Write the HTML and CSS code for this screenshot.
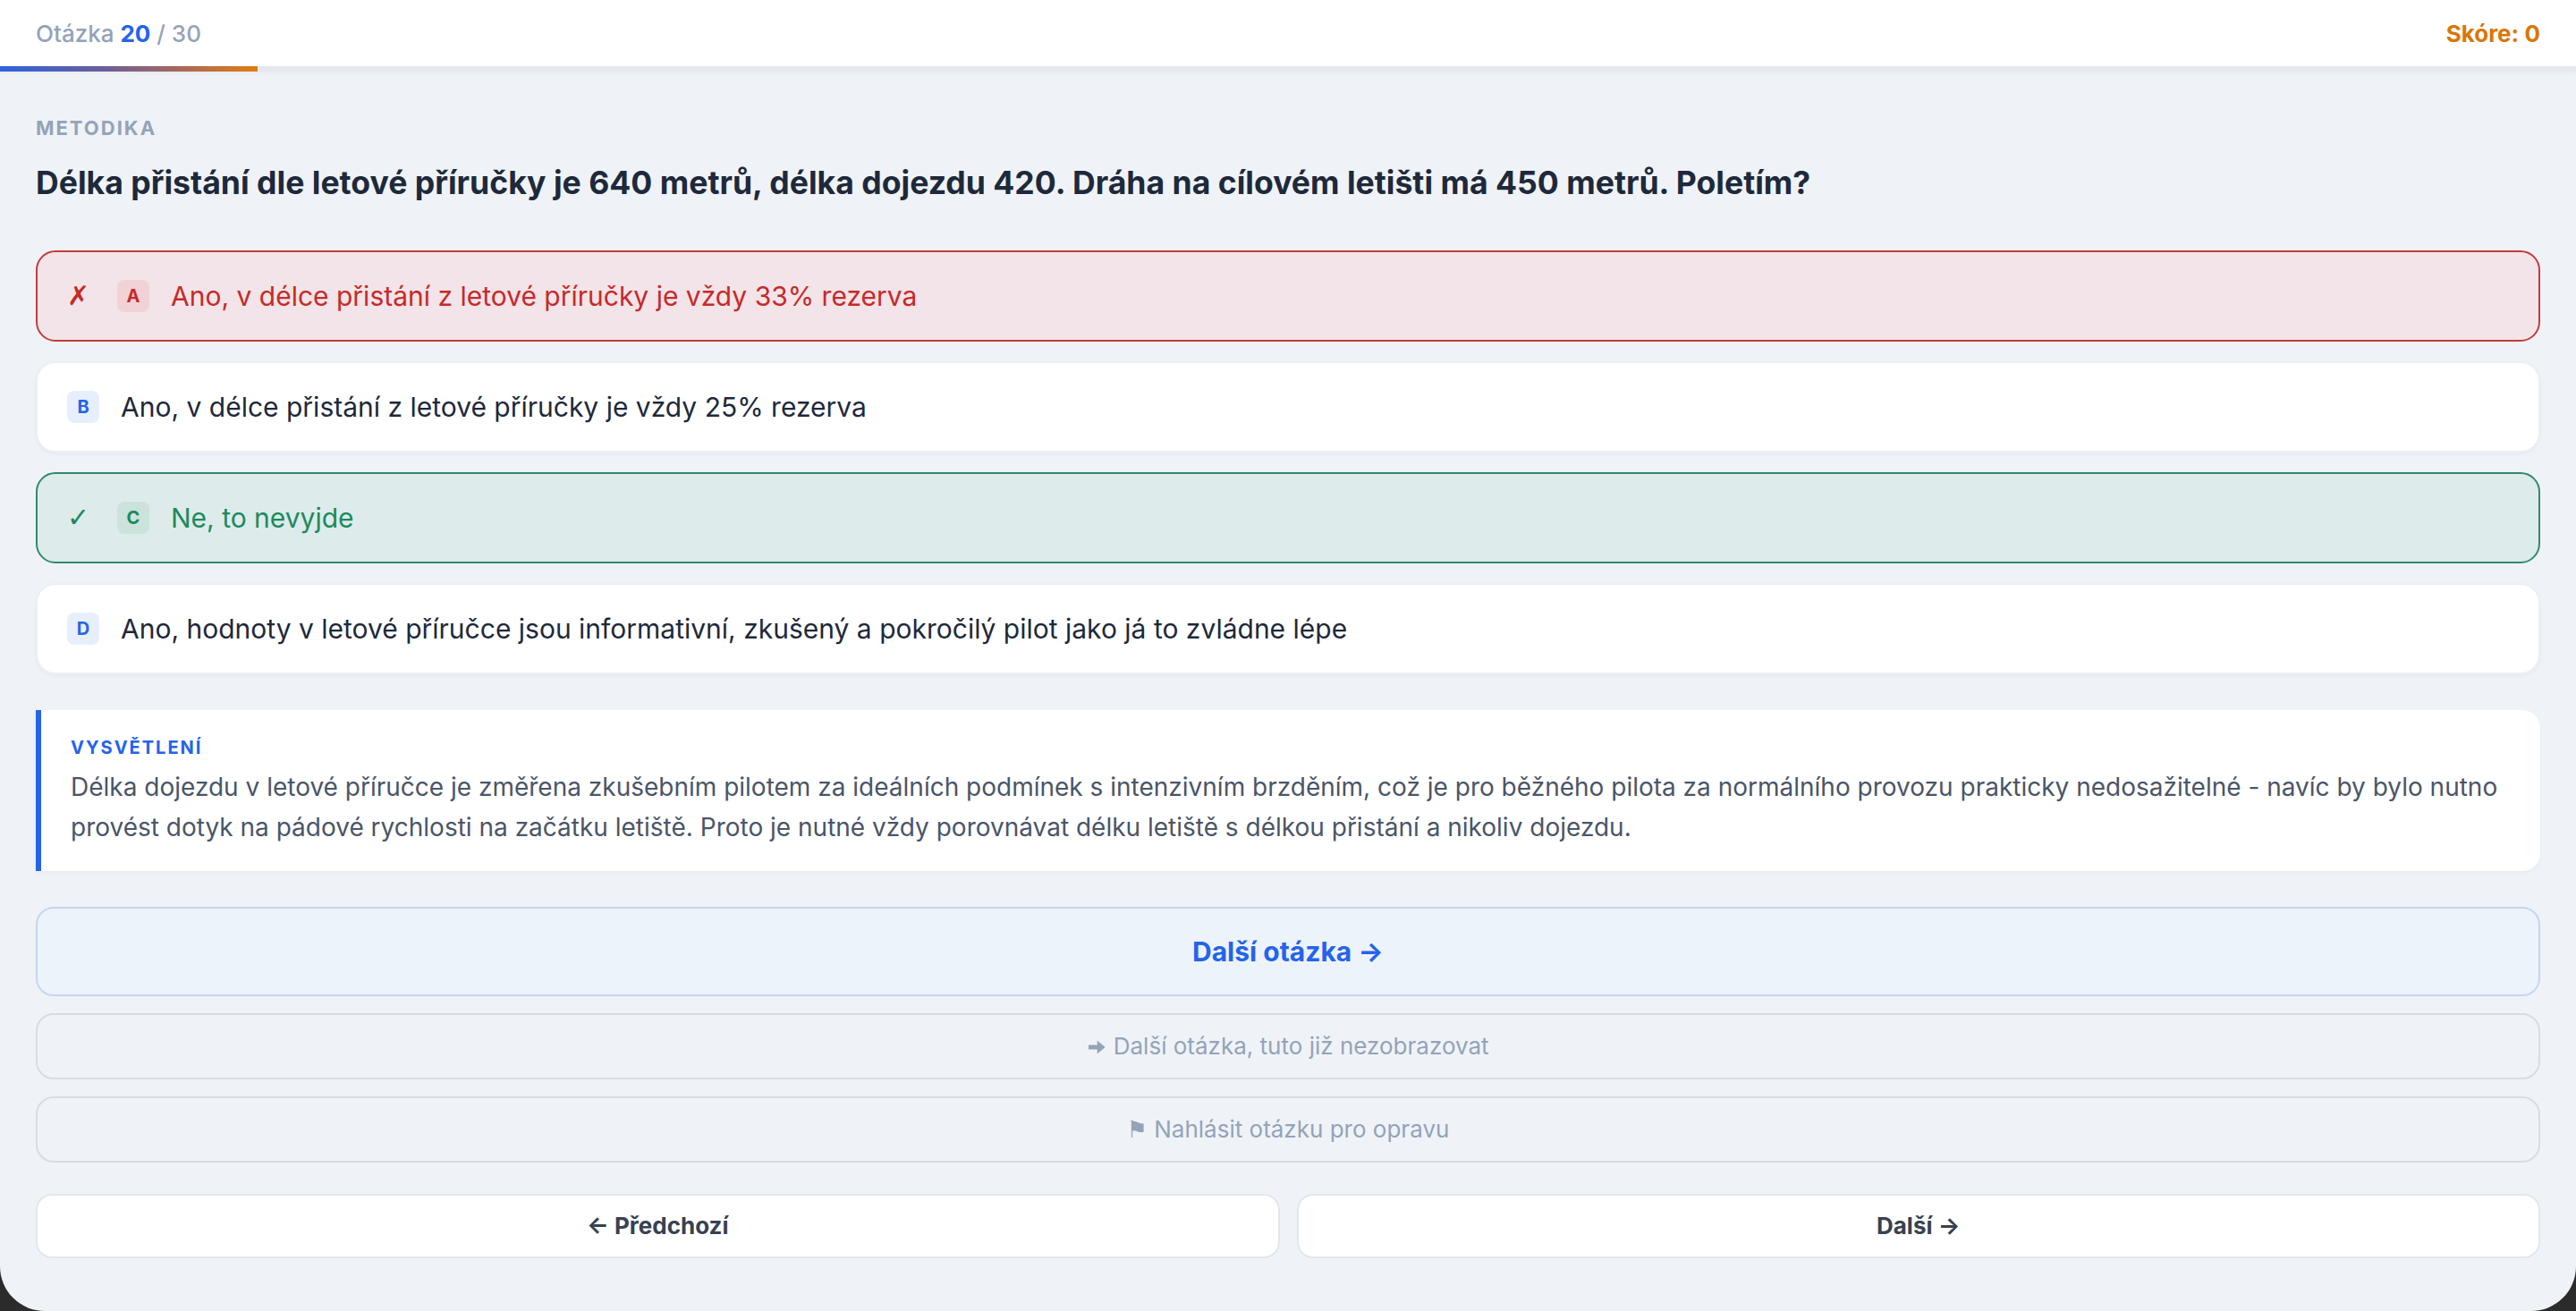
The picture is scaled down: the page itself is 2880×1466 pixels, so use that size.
FILE: index.html
```html
<!DOCTYPE html>
<html lang="cs">
<head>
<meta charset="utf-8">
<title>Otázka 20 / 30</title>
<link rel="stylesheet" href="styles.css">
</head>
<body>
<div class="app">
  <header class="topbar">
    <div class="counter">Otázka <b>20</b> / 30</div>
    <div class="score">Skóre: 0</div>
  </header>
  <div class="progress"><div class="progress-fill" style="width:10%"></div></div>

  <main class="quiz">
    <div class="category">Metodika</div>
    <h1 class="question">Délka přistání dle letové příručky je 640 metrů, délka dojezdu 420. Dráha na cílovém letišti má 450 metrů. Poletím?</h1>

    <ul class="options">
      <li class="option wrong">
        <span class="mark">✗</span>
        <span class="key">A</span>
        <span class="answer">Ano, v délce přistání z letové příručky je vždy 33% rezerva</span>
      </li>
      <li class="option">
        <span class="key">B</span>
        <span class="answer">Ano, v délce přistání z letové příručky je vždy 25% rezerva</span>
      </li>
      <li class="option correct">
        <span class="mark">✓</span>
        <span class="key">C</span>
        <span class="answer">Ne, to nevyjde</span>
      </li>
      <li class="option">
        <span class="key">D</span>
        <span class="answer">Ano, hodnoty v letové příručce jsou informativní, zkušený a pokročilý pilot jako já to zvládne lépe</span>
      </li>
    </ul>

    <section class="explain">
      <div class="explain-label">Vysvětlení</div>
      <p class="explain-text">Délka dojezdu v letové příručce je změřena zkušebním pilotem za ideálních podmínek s intenzivním brzděním, což je pro běžného pilota za normálního provozu prakticky nedosažitelné - navíc by bylo nutno provést dotyk na pádové rychlosti na začátku letiště. Proto je nutné vždy porovnávat délku letiště s délkou přistání a nikoliv dojezdu.</p>
    </section>

    <div class="actions">
      <button class="btn btn-primary">Další otázka →</button>
      <button class="btn btn-muted"><svg class="skip-icon" viewBox="0 0 16 16" aria-hidden="true"><path d="M1.5 6.2h7V2.5L15 8l-6.5 5.5V9.8h-7z"/></svg> Další otázka, tuto již nezobrazovat</button>
      <button class="btn btn-muted"><span class="glyph">⚑</span> Nahlásit otázku pro opravu</button>
    </div>

    <nav class="pager">
      <button class="btn btn-nav">← Předchozí</button>
      <button class="btn btn-nav">Další →</button>
    </nav>
  </main>
</div>
</body>
</html>
```

FILE: styles.css
```css
html {
  height: 100%;
  background: #2b2b2b;
}

body {
  margin: 0;
  height: 100%;
  font-family: Inter, "Noto Sans", sans-serif;
  -webkit-font-smoothing: antialiased;
}

.app {
  height: 100vh;
  background: #eff3f8;
  border-radius: 0 0 50px 50px;
  overflow: hidden;
  display: flex;
  flex-direction: column;
}

/* top bar */
.topbar {
  height: 74px;
  flex: none;
  background: #fff;
  display: flex;
  align-items: center;
  justify-content: space-between;
  padding: 0 40px;
  font-size: 26px;
}

.counter {
  color: #94a3b8;
  font-weight: 500;
}

.counter b {
  color: #2563eb;
  font-weight: 700;
}

.score {
  color: #d97706;
  font-weight: 700;
}

.progress {
  height: 6px;
  flex: none;
  background: #e4e8ee;
  box-shadow: 0 2px 4px rgba(15, 23, 42, 0.04);
}

.progress-fill {
  height: 100%;
  background: linear-gradient(90deg, #2f62e0 0%, #6b5f9a 40%, #a8685a 70%, #e27d10 100%);
}

/* question */
.quiz {
  padding: 49px 40px 0;
}

.category {
  font-size: 22px;
  line-height: 28px;
  font-weight: 700;
  letter-spacing: 2px;
  text-transform: uppercase;
  color: #94a3b8;
}

.question {
  margin: 23px 0 0;
  font-size: 35.6px;
  line-height: 50px;
  font-weight: 700;
  color: #1e293b;
}

/* answers */
.options {
  list-style: none;
  margin: 50px 0 0;
  padding: 0;
  display: flex;
  flex-direction: column;
  gap: 22px;
}

.option {
  display: flex;
  align-items: center;
  gap: 24px;
  padding: 28px 33px;
  background: #fff;
  border: 2px solid #eceff3;
  border-radius: 22px;
  box-shadow: 0 2px 4px rgba(15, 23, 42, 0.04);
  font-size: 30px;
  line-height: 42px;
  color: #1e293b;
}

.mark {
  width: 32px;
  flex: none;
  font-family: "DejaVu Sans", sans-serif;
  font-size: 30px;
  font-weight: 700;
}

.key {
  width: 36px;
  height: 36px;
  flex: none;
  display: flex;
  align-items: center;
  justify-content: center;
  border-radius: 8px;
  background: #e8effc;
  color: #2563eb;
  font-size: 20px;
  font-weight: 700;
  line-height: 1;
}

.option.wrong {
  background: #f2e4e8;
  border-color: #c53a3d;
  color: #c62a2a;
  box-shadow: none;
}

.option.wrong .key {
  background: #f1d2d6;
  color: #c62a2a;
}

.option.correct {
  background: #ddebeb;
  border-color: #2f8a68;
  color: #1c8a5c;
  box-shadow: none;
}

.option.correct .key {
  background: #cce3dc;
  color: #1c8a5c;
}

/* explanation */
.explain {
  margin-top: 40px;
  background: #fff;
  border-left: 6px solid #2563eb;
  border-radius: 0 20px 20px 0;
  padding: 28px 40px 26px 33px;
  box-shadow: 0 2px 4px rgba(15, 23, 42, 0.04);
}

.explain-label {
  font-size: 20px;
  line-height: 28px;
  font-weight: 700;
  letter-spacing: 2px;
  text-transform: uppercase;
  color: #2563eb;
}

.explain-text {
  margin: 8px 0 0;
  font-size: 28px;
  line-height: 45px;
  color: #4a5568;
}

/* buttons */
.btn {
  display: block;
  width: 100%;
  font-family: inherit;
  text-align: center;
  cursor: pointer;
  border-radius: 20px;
}

.actions {
  margin-top: 40px;
  display: flex;
  flex-direction: column;
  gap: 19px;
}

.btn-primary {
  padding: 27px 0;
  background: #edf3fb;
  border: 2px solid #c5d6ef;
  color: #2563eb;
  font-size: 30px;
  line-height: 42px;
  font-weight: 700;
}

.btn-muted {
  padding: 18px 0;
  background: transparent;
  border: 2px solid #d6dce4;
  color: #94a3b8;
  font-size: 26px;
  line-height: 34px;
}

.skip-icon {
  width: 22px;
  height: 22px;
  vertical-align: -3px;
  fill: #94a3b8;
}

.glyph {
  font-family: "DejaVu Sans", sans-serif;
  font-size: 26px;
}

.pager {
  margin-top: 35px;
  display: grid;
  grid-template-columns: 1fr 1fr;
  gap: 19px;
}

.btn-nav {
  padding: 17px 0;
  background: #fff;
  border: 2px solid #e3e7ec;
  border-radius: 18px;
  color: #374151;
  font-size: 26px;
  line-height: 34px;
  font-weight: 700;
}
```
